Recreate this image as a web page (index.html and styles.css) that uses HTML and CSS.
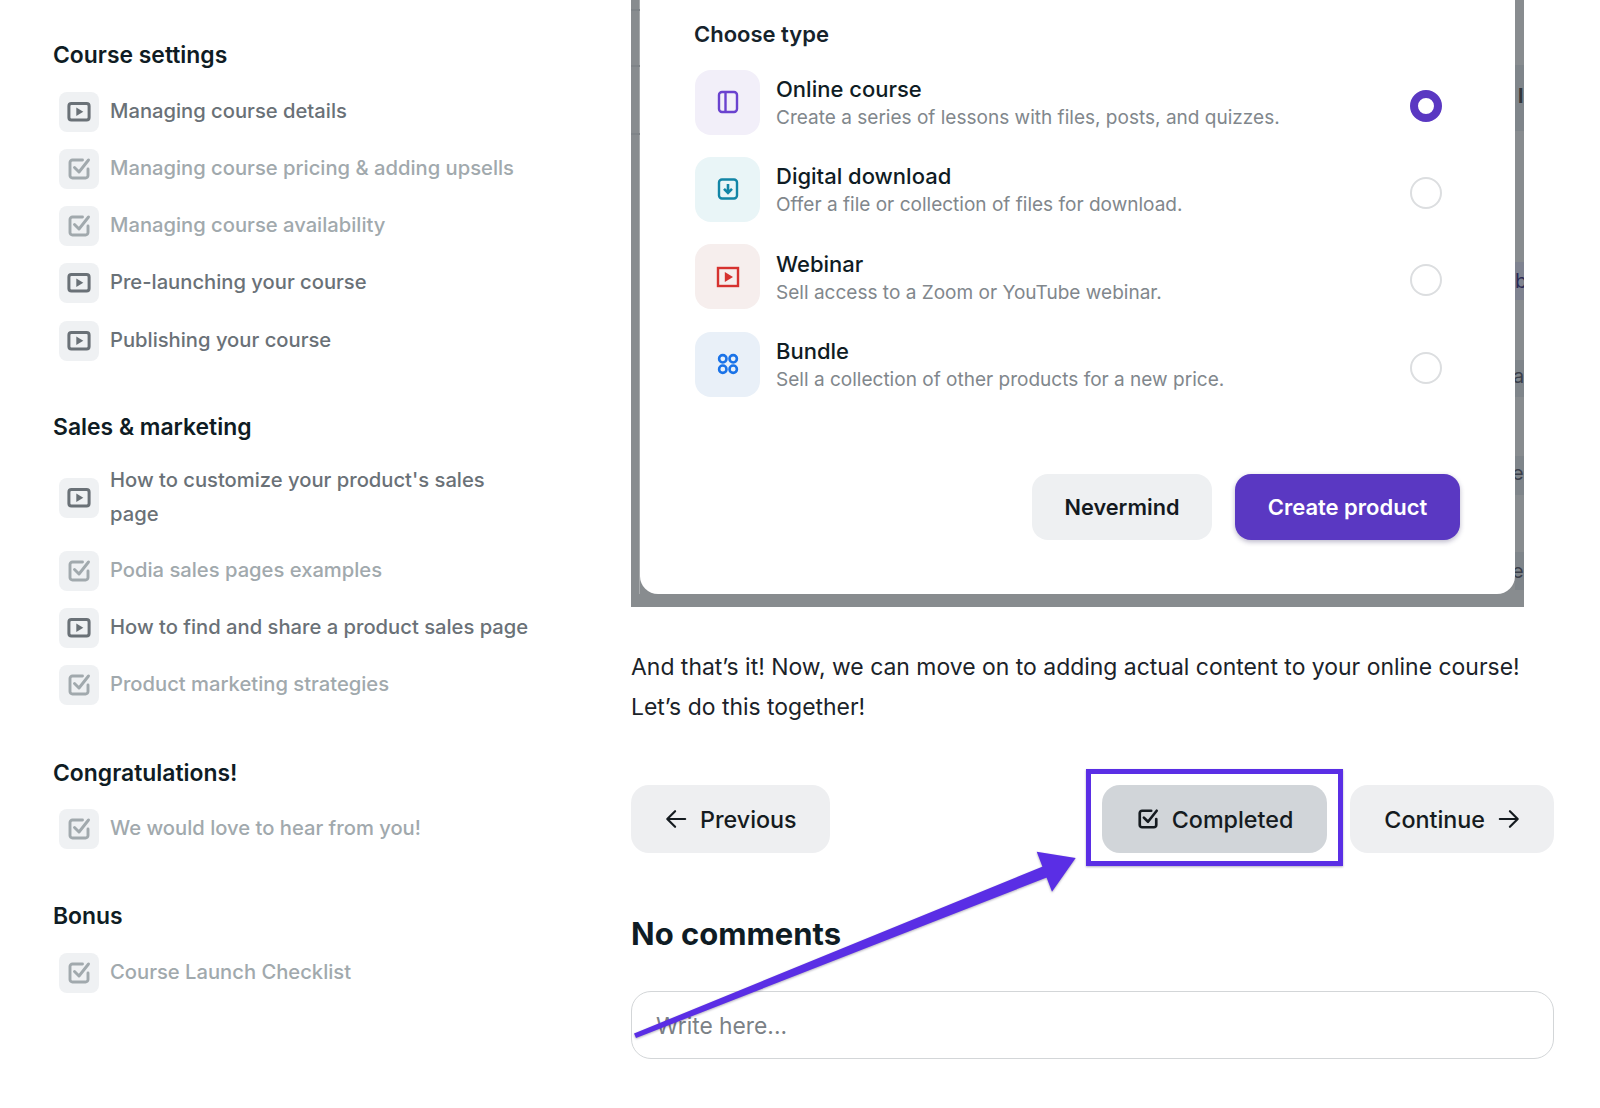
FILE: index.html
```html
<!DOCTYPE html>
<html lang="en">
<head>
<meta charset="utf-8">
<title>Creating a product</title>
<link rel="stylesheet" href="styles.css">
</head>
<body>
<svg class="defs" width="0" height="0" aria-hidden="true">
  <symbol id="i-video" viewBox="0 0 24 24">
    <rect x="1.9" y="3.6" width="20.2" height="16.4" rx="2.5" fill="none" stroke="currentColor" stroke-width="3"/>
    <path d="M9.3 7.6 16.3 11.8 9.3 16z" fill="currentColor"/>
  </symbol>
  <symbol id="i-check" viewBox="0 0 24 24">
    <path d="M15.5 3H5.5A2.5 2.5 0 0 0 3 5.5v13A2.5 2.5 0 0 0 5.5 21h13a2.5 2.5 0 0 0 2.5-2.5V12" fill="none" stroke="currentColor" stroke-width="2.9" stroke-linecap="round" stroke-linejoin="round"/>
    <path d="M7.5 10.5 12 15l9.5-12" fill="none" stroke="currentColor" stroke-width="2.9" stroke-linecap="round" stroke-linejoin="round"/>
  </symbol>
</svg>

<div class="page">
  <aside class="sidebar">
    <section class="section">
      <h3 class="section-title">Course settings</h3>
      <ul class="lessons">
        <li class="lesson"><span class="lesson-icon"><svg class="glyph"><use href="#i-video"/></svg></span><span class="lesson-name">Managing course details</span></li>
        <li class="lesson done"><span class="lesson-icon"><svg class="glyph"><use href="#i-check"/></svg></span><span class="lesson-name">Managing course pricing &amp; adding upsells</span></li>
        <li class="lesson done"><span class="lesson-icon"><svg class="glyph"><use href="#i-check"/></svg></span><span class="lesson-name">Managing course availability</span></li>
        <li class="lesson"><span class="lesson-icon"><svg class="glyph"><use href="#i-video"/></svg></span><span class="lesson-name">Pre-launching your course</span></li>
        <li class="lesson"><span class="lesson-icon"><svg class="glyph"><use href="#i-video"/></svg></span><span class="lesson-name">Publishing your course</span></li>
      </ul>
    </section>
    <section class="section">
      <h3 class="section-title">Sales &amp; marketing</h3>
      <ul class="lessons">
        <li class="lesson"><span class="lesson-icon"><svg class="glyph"><use href="#i-video"/></svg></span><span class="lesson-name">How to customize your product's sales page</span></li>
        <li class="lesson done"><span class="lesson-icon"><svg class="glyph"><use href="#i-check"/></svg></span><span class="lesson-name">Podia sales pages examples</span></li>
        <li class="lesson"><span class="lesson-icon"><svg class="glyph"><use href="#i-video"/></svg></span><span class="lesson-name">How to find and share a product sales page</span></li>
        <li class="lesson done"><span class="lesson-icon"><svg class="glyph"><use href="#i-check"/></svg></span><span class="lesson-name">Product marketing strategies</span></li>
      </ul>
    </section>
    <section class="section">
      <h3 class="section-title">Congratulations!</h3>
      <ul class="lessons">
        <li class="lesson done"><span class="lesson-icon"><svg class="glyph"><use href="#i-check"/></svg></span><span class="lesson-name">We would love to hear from you!</span></li>
      </ul>
    </section>
    <section class="section">
      <h3 class="section-title">Bonus</h3>
      <ul class="lessons">
        <li class="lesson done"><span class="lesson-icon"><svg class="glyph"><use href="#i-check"/></svg></span><span class="lesson-name">Course Launch Checklist</span></li>
      </ul>
    </section>
  </aside>

  <main class="content">
    <figure class="shot">
      <div class="strip strip-left">
        <i class="rule rule-1"></i><i class="rule rule-2"></i><i class="rule rule-3"></i>
      </div>
      <div class="modal">
        <h4 class="modal-title">Choose type</h4>
        <div class="types">
          <div class="type">
            <span class="type-icon tint-purple">
              <svg width="24" height="24" viewBox="0 0 24 24" fill="none" stroke="#6a42cf" stroke-width="2.4"><rect x="3" y="2" width="18" height="20" rx="3"/><path d="M9.5 2v20"/></svg>
            </span>
            <div class="type-text"><div class="type-name">Online course</div><div class="type-desc">Create a series of lessons with files, posts, and quizzes.</div></div>
            <span class="radio radio-on"></span>
          </div>
          <div class="type">
            <span class="type-icon tint-teal">
              <svg width="24" height="24" viewBox="0 0 24 24" fill="none" stroke="#1285a6" stroke-width="2.4"><rect x="3" y="2.5" width="18" height="19" rx="3"/><path d="M12 7v8.5M8 11.8l4 4 4-4" stroke-width="2.6"/></svg>
            </span>
            <div class="type-text"><div class="type-name">Digital download</div><div class="type-desc">Offer a file or collection of files for download.</div></div>
            <span class="radio"></span>
          </div>
          <div class="type">
            <span class="type-icon tint-red">
              <svg width="24" height="24" viewBox="0 0 24 24" fill="none" stroke="#d6322f" stroke-width="2.4"><rect x="2" y="3" width="20" height="18"/><path d="M8.8 7 17 12 8.8 17z" fill="#d6322f" stroke="none"/></svg>
            </span>
            <div class="type-text"><div class="type-name">Webinar</div><div class="type-desc">Sell access to a Zoom or YouTube webinar.</div></div>
            <span class="radio"></span>
          </div>
          <div class="type">
            <span class="type-icon tint-blue">
              <svg width="24" height="24" viewBox="0 0 24 24" fill="none" stroke="#1a73e8" stroke-width="2.6"><circle cx="6.8" cy="6.8" r="3.7"/><circle cx="17.2" cy="6.8" r="3.7"/><circle cx="6.8" cy="17.2" r="3.7"/><circle cx="17.2" cy="17.2" r="3.7"/></svg>
            </span>
            <div class="type-text"><div class="type-name">Bundle</div><div class="type-desc">Sell a collection of other products for a new price.</div></div>
            <span class="radio"></span>
          </div>
        </div>
        <div class="modal-actions">
          <button class="modal-btn btn-quiet">Nevermind</button>
          <button class="modal-btn btn-primary">Create product</button>
        </div>
      </div>
      <div class="strip strip-right">
        <span class="band band-1"><b class="peek peek-1">l</b></span>
        <span class="band band-2"><b class="peek peek-2">b</b></span>
        <span class="band band-3"><b class="peek peek-3">a</b></span>
        <span class="band band-4"><b class="peek peek-4">e</b></span>
        <span class="band band-5"><b class="peek peek-5">e</b></span>
      </div>
    </figure>

    <p class="lead">And that’s it! Now, we can move on to adding actual content to your online course! Let’s do this together!</p>

    <nav class="pager">
      <button class="pager-btn is-back">
        <svg class="pager-icon" viewBox="0 0 24 24" fill="none" stroke="currentColor" stroke-width="2.4" stroke-linecap="round" stroke-linejoin="round"><path d="M22 12H3M11 3.5 2.5 12l8.5 8.5"/></svg>
        Previous
      </button>
      <div class="pager-right">
        <button class="pager-btn is-complete">
          <svg class="pager-icon"><use href="#i-check"/></svg>
          Completed
          <span class="highlight"></span>
        </button>
        <button class="pager-btn">
          Continue
          <svg class="pager-icon" viewBox="0 0 24 24" fill="none" stroke="currentColor" stroke-width="2.4" stroke-linecap="round" stroke-linejoin="round"><path d="M2 12h19M13 3.5l8.5 8.5-8.5 8.5"/></svg>
        </button>
      </div>
    </nav>

    <h2 class="comments-title">No comments</h2>
    <div class="comment-box">Write here...</div>
  </main>

  <svg class="annotation" width="1600" height="1108" viewBox="0 0 1600 1108" aria-hidden="true">
    <path d="M634 1033.5 1044 866l4 11L636 1038z M1036.7 851.7 1075.7 858 1052 891.7z" fill="#5a2ee5"/>
  </svg>
</div>
</body>
</html>
```

FILE: styles.css
```css
* { box-sizing: border-box; }

html, body { margin: 0; padding: 0; background: #fff; }

body {
  font-family: Inter, "Liberation Sans", sans-serif;
  color: #0f1c24;
  height: 1108px;
  overflow: hidden;
}

.defs { position: absolute; }

.page {
  position: relative;
  display: flex;
  height: 1108px;
}

/* Sidebar */
.sidebar {
  width: 631px;
  flex: none;
  padding: 38px 94px 0 53px;
}

.section { margin-bottom: 50.3px; }
.section:first-child { margin-bottom: 49px; }

.section-title {
  margin: 0 0 19.5px;
  font-size: 22.9px;
  line-height: 34px;
  font-weight: 600;
  color: #0f1c24;
}

.lessons {
  list-style: none;
  margin: 0;
  padding: 0 0 0 6px;
  display: flex;
  flex-direction: column;
  gap: 17.33px;
}

.lesson {
  display: flex;
  align-items: center;
  gap: 11px;
  min-height: 40px;
  font-size: 20.2px;
  line-height: 34px;
  font-weight: 500;
  color: #6a7177;
}

.lesson.done { color: #a1a9ad; }

.lesson-name { padding: 2px 0; margin-top: -2px; }

.lesson-icon {
  flex: none;
  width: 40px;
  height: 40px;
  border-radius: 8px;
  background: #eff1f3;
  display: flex;
  align-items: center;
  justify-content: center;
}

.glyph { width: 24px; height: 24px; }

/* Screenshot with modal */
.content {
  width: 923px;
  flex: none;
}

.shot {
  position: relative;
  margin: 0;
  width: 893px;
  height: 607px;
  background: #888c8f;
  padding: 0 9px 13px;
}

.strip {
  position: absolute;
  top: 0;
  bottom: 0;
  width: 9px;
  overflow: hidden;
}

.strip-left { left: 0; bottom: 13px; box-shadow: inset -1px 0 0 #a8abad; }
.strip-right { right: 0; }

.rule {
  position: absolute;
  left: 0;
  right: 0;
  height: 2px;
  background: #7f8488;
}
.rule-1 { top: 9px; }
.rule-2 { top: 65px; }
.rule-3 { top: 133px; }

.band {
  position: absolute;
  left: 0;
  right: 0;
  background: #7f858a;
}
.band-1 { top: 65px; height: 66px; }
.band-2 { top: 262px; height: 38px; background: #7f8390; }
.band-3 { top: 360px; height: 37px; }
.band-4 { top: 456px; height: 39px; }
.band-5 { top: 552px; height: 38px; }

.peek {
  position: absolute;
  left: 2px;
  font-size: 20px;
  line-height: 20px;
  font-weight: 400;
  color: #3b3f4a;
}
.peek-1 { top: 21px; left: 3px; font-weight: 700; color: #33373b; }
.peek-2 { top: 9px; left: 0; color: #2c2a55; }
.peek-3 { top: 6px; left: -2px; }
.peek-4 { top: 7px; left: -3px; }
.peek-5 { top: 9px; left: -3px; }

.modal {
  height: 100%;
  background: #fff;
  border-radius: 0 0 18px 18px;
  padding: 20px 55px 0;
}

.modal-title {
  margin: 0 0 21.5px -1px;
  font-size: 22px;
  line-height: 28px;
  font-weight: 600;
  color: #16232b;
}

.types {
  display: flex;
  flex-direction: column;
  gap: 22.4px;
  padding-right: 18.5px;
}

.type {
  display: flex;
  align-items: center;
  gap: 16px;
}

.type-icon {
  flex: none;
  width: 65px;
  height: 65px;
  border-radius: 16px;
  display: flex;
  align-items: center;
  justify-content: center;
}

.tint-purple { background: #f2eff9; }
.tint-teal { background: #e9f5f7; }
.tint-red { background: #f6eeed; }
.tint-blue { background: #e9f0f8; }

.type-text { flex: 1; padding-top: 3px; }

.type-name {
  font-size: 22px;
  line-height: 28px;
  font-weight: 500;
  color: #0f1c24;
}

.type-desc {
  margin-top: 1px;
  font-size: 19.05px;
  line-height: 28px;
  color: #81878c;
}

.radio {
  flex: none;
  width: 32px;
  height: 32px;
  margin-top: 7px;
  border-radius: 50%;
  border: 2px solid #dcdee0;
}

.radio-on { border: 8.5px solid #5a38c2; }

.modal-actions {
  display: flex;
  justify-content: flex-end;
  gap: 23px;
  margin-top: 77px;
}

.modal-btn {
  height: 66px;
  border: 0;
  border-radius: 16px;
  font: 600 22px Inter, "Liberation Sans", sans-serif;
}

.btn-quiet {
  width: 180px;
  background: #eef0f2;
  color: #141a1f;
  font-size: 21.7px;
}

.btn-primary {
  width: 225px;
  background: #5a38c2;
  color: #fff;
  box-shadow: 0 2px 5px rgba(30, 20, 80, 0.3);
}

/* Copy */
.lead {
  margin: 40px 0 58px;
  font-size: 22.95px;
  line-height: 40px;
  color: #1b2329;
}

.pager {
  display: flex;
  justify-content: space-between;
}

.pager-right {
  display: flex;
  gap: 23px;
}

.pager-btn {
  position: relative;
  display: flex;
  align-items: center;
  gap: 13px;
  height: 68px;
  padding: 0 34px;
  border: 0;
  border-radius: 18px;
  background: #eeeff1;
  color: #151b20;
  font: 500 23.3px Inter, "Liberation Sans", sans-serif;
}

.pager-btn.is-back { padding-right: 33px; }

.pager-btn.is-complete { padding: 0 34px 0 35px; background: #d1d5d9; }

.pager-icon { width: 22px; height: 22px; flex: none; }

.highlight {
  position: absolute;
  top: -16px;
  right: -16px;
  bottom: -13px;
  left: -16px;
  border: 5px solid #5a2ee5;
  box-shadow: 0 1px 2px rgba(30, 20, 80, 0.35);
}

.comments-title {
  margin: 61px 0 37px;
  font-size: 31px;
  line-height: 40px;
  font-weight: 700;
  color: #0f1c24;
}

.comment-box {
  height: 68px;
  padding: 0 24px;
  display: flex;
  align-items: center;
  border: 1.5px solid #d3d6d8;
  border-radius: 20px;
  font-size: 22.8px;
  color: #7b8186;
}

.annotation {
  position: absolute;
  left: 0;
  top: 0;
  pointer-events: none;
  filter: drop-shadow(0 1px 1px rgba(30, 20, 60, 0.35));
}
```
